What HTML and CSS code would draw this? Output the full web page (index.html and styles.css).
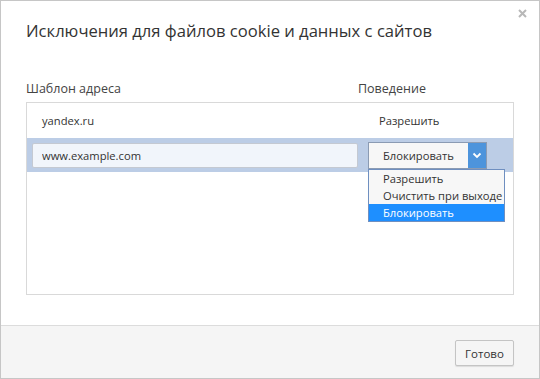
FILE: index.html
```html
<!DOCTYPE html>
<html lang="ru">
<head>
    <meta charset="UTF-8">
    <title>Исключения</title>
    <link rel="stylesheet" href="styles.css">
</head>
<body>
    <div class="dialog">
        <span class="close-button">
            <svg width="9" height="9" viewBox="0 0 9 9"><path d="M1 1 L8 8 M8 1 L1 8" stroke="#b8b8b8" stroke-width="2"/></svg>
        </span>
        <div class="dialog-body">
            <h1 class="dialog-title">Исключения для файлов cookie и данных с сайтов</h1>
            <div class="list-header">
                <span class="col-pattern">Шаблон адреса</span>
                <span class="col-behavior">Поведение</span>
            </div>
            <div class="exceptions-list">
                <div class="list-row">
                    <span class="col-pattern row-text">yandex.ru</span>
                    <span class="col-behavior row-text">Разрешить</span>
                </div>
                <div class="list-row selected">
                    <input class="pattern-input" type="text" value="www.example.com">
                    <div class="select-box">
                        <span class="select-value">Блокировать</span>
                        <span class="select-arrow">
                            <svg width="10" height="7" viewBox="0 0 10 7"><path d="M1.5 1.5 L5 5 L8.5 1.5" fill="none" stroke="#fff" stroke-width="1.8"/></svg>
                        </span>
                        <ul class="select-options">
                            <li>Разрешить</li>
                            <li>Очистить при выходе</li>
                            <li class="active">Блокировать</li>
                        </ul>
                    </div>
                </div>
            </div>
        </div>
        <div class="dialog-footer">
            <button class="done-button">Готово</button>
        </div>
    </div>
</body>
</html>
```

FILE: styles.css
```css
body {
    margin: 0;
    font-family: "Open Sans", "Noto Sans", Arial, sans-serif;
    color: #333;
    background-color: #fff;
}
.dialog {
    position: relative;
    width: 540px;
    height: 379px;
    box-sizing: border-box;
    border: 1px solid #c6c6c6;
    display: flex;
    flex-direction: column;
}
.close-button {
    position: absolute;
    top: 8px;
    right: 12px;
    line-height: 0;
}
.dialog-body {
    flex: 1;
    padding: 0 25px;
}
.dialog-title {
    margin: 19px 0 0;
    font-size: 16.6px;
    line-height: 22px;
    font-weight: normal;
    color: #333;
}
.list-header {
    display: flex;
    margin-top: 38px;
    font-size: 12.5px;
    color: #444;
    line-height: 18px;
}
.col-pattern {
    width: 332px;
}
.exceptions-list {
    margin-top: 4px;
    height: 191px;
    border: 1px solid #d9d9d9;
}
.list-row {
    display: flex;
    align-items: center;
    height: 35px;
    font-size: 11.2px;
}
.row-text.col-pattern {
    padding-left: 15px;
    width: 337px;
}
.list-row.selected {
    height: 34px;
    background-color: #bccde6;
}
.pattern-input {
    margin-left: 5px;
    width: 326px;
    height: 25px;
    box-sizing: border-box;
    border: 1px solid #c4c9d2;
    border-radius: 2px;
    background-color: #f1f5fb;
    padding: 0 9px;
    font-family: inherit;
    font-size: 11.2px;
    color: #333;
}
.select-box {
    position: relative;
    display: flex;
    margin-left: 10px;
    width: 119px;
    height: 27px;
    box-sizing: border-box;
    border: 1px solid #8b9bb3;
    background-color: #f7f7f7;
}
.select-value {
    flex: 1;
    padding-left: 14px;
    line-height: 25px;
    font-size: 11.2px;
}
.select-arrow {
    width: 18px;
    background-color: #4d94dc;
    display: flex;
    align-items: center;
    justify-content: center;
}
.select-options {
    position: absolute;
    top: 26px;
    left: -1px;
    width: 137px;
    margin: 0;
    padding: 0;
    list-style: none;
    box-sizing: border-box;
    border: 1px solid #6f8fc0;
    background-color: #f7f7f7;
    font-size: 11.2px;
}
.select-options li {
    padding-left: 14px;
    line-height: 17px;
    white-space: nowrap;
}
.select-options li.active {
    background-color: #1e8fff;
    color: #fff;
}
.dialog-footer {
    height: 53px;
    box-sizing: border-box;
    border-top: 1px solid #dcdcdc;
    background-color: #f5f5f5;
    display: flex;
    justify-content: flex-end;
    align-items: center;
    padding-right: 25px;
}
.done-button {
    width: 59px;
    height: 26px;
    margin-top: 2px;
    border: 1px solid #c4c4c4;
    border-radius: 2px;
    background-color: #f5f5f5;
    box-shadow: 0 1px 1px rgba(0, 0, 0, 0.1);
    font-family: inherit;
    font-size: 11.5px;
    color: #333;
}
```
